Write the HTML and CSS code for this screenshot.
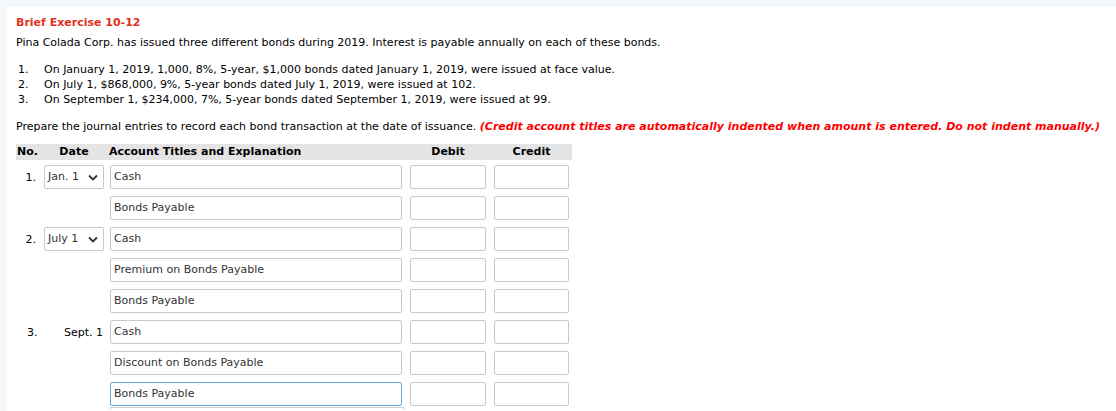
FILE: index.html
```html
<!DOCTYPE html>
<html>
<head>
<meta charset="utf-8">
<link rel="stylesheet" href="styles.css">
</head>
<body>
<div class="page">
  <h1 class="title">Brief Exercise 10-12</h1>
  <p class="intro">Pina Colada Corp. has issued three different bonds during 2019. Interest is payable annually on each of these bonds.</p>
  <ol class="items">
    <li><span class="num">1.</span><span>On January 1, 2019, 1,000, 8%, 5-year, $1,000 bonds dated January 1, 2019, were issued at face value.</span></li>
    <li><span class="num">2.</span><span>On July 1, $868,000, 9%, 5-year bonds dated July 1, 2019, were issued at 102.</span></li>
    <li><span class="num">3.</span><span>On September 1, $234,000, 7%, 5-year bonds dated September 1, 2019, were issued at 99.</span></li>
  </ol>
  <p class="prompt">Prepare the journal entries to record each bond transaction at the date of issuance. <em class="warn">(Credit account titles are automatically indented when amount is entered. Do not indent manually.)</em></p>

  <div class="journal">
    <div class="head">
      <div class="c-no">No.</div>
      <div class="c-date">Date</div>
      <div class="c-acct">Account Titles and Explanation</div>
      <div class="c-dr">Debit</div>
      <div class="c-cr">Credit</div>
    </div>

    <div class="row">
      <div class="c-no num-r">1.</div>
      <div class="c-date"><div class="select">Jan. 1<svg class="chev" viewBox="0 0 10 6"><path d="M1 1 L5 5 L9 1" /></svg></div></div>
      <div class="c-acct"><div class="field">Cash</div></div>
      <div class="c-dr"><div class="field"></div></div>
      <div class="c-cr"><div class="field"></div></div>
    </div>
    <div class="row">
      <div class="c-no"></div>
      <div class="c-date"></div>
      <div class="c-acct"><div class="field">Bonds Payable</div></div>
      <div class="c-dr"><div class="field"></div></div>
      <div class="c-cr"><div class="field"></div></div>
    </div>

    <div class="row">
      <div class="c-no num-r">2.</div>
      <div class="c-date"><div class="select">July 1<svg class="chev" viewBox="0 0 10 6"><path d="M1 1 L5 5 L9 1" /></svg></div></div>
      <div class="c-acct"><div class="field">Cash</div></div>
      <div class="c-dr"><div class="field"></div></div>
      <div class="c-cr"><div class="field"></div></div>
    </div>
    <div class="row">
      <div class="c-no"></div>
      <div class="c-date"></div>
      <div class="c-acct"><div class="field">Premium on Bonds Payable</div></div>
      <div class="c-dr"><div class="field"></div></div>
      <div class="c-cr"><div class="field"></div></div>
    </div>
    <div class="row">
      <div class="c-no"></div>
      <div class="c-date"></div>
      <div class="c-acct"><div class="field">Bonds Payable</div></div>
      <div class="c-dr"><div class="field"></div></div>
      <div class="c-cr"><div class="field"></div></div>
    </div>

    <div class="row">
      <div class="c-no num-r">3.</div>
      <div class="c-date date-text">Sept. 1</div>
      <div class="c-acct"><div class="field">Cash</div></div>
      <div class="c-dr"><div class="field"></div></div>
      <div class="c-cr"><div class="field"></div></div>
    </div>
    <div class="row">
      <div class="c-no"></div>
      <div class="c-date"></div>
      <div class="c-acct"><div class="field">Discount on Bonds Payable</div></div>
      <div class="c-dr"><div class="field"></div></div>
      <div class="c-cr"><div class="field"></div></div>
    </div>
    <div class="row last">
      <div class="c-no"></div>
      <div class="c-date"></div>
      <div class="c-acct anchor"><div class="field focus">Bonds Payable</div><div class="dropdown"></div></div>
      <div class="c-dr"><div class="field"></div></div>
      <div class="c-cr"><div class="field"></div></div>
    </div>
  </div>
</div>
</body>
</html>
```

FILE: styles.css
```css
html, body {
  margin: 0;
  padding: 0;
}
body {
  background: #f5f8fb;
  font-family: "DejaVu Sans", Verdana, sans-serif;
  font-size: 11px;
  color: #000;
  overflow: hidden;
  height: 411px;
}
.page {
  margin: 7px 0 0 7px;
  background: #fff;
  padding: 9px 9px 0 9px;
  height: 404px;
  box-sizing: border-box;
  overflow: hidden;
}
.title {
  margin: 0;
  font-size: 11px;
  font-weight: bold;
  color: #e2301a;
  line-height: 14px;
}
.intro {
  margin: 6px 0 0 0;
  line-height: 14px;
}
.items {
  list-style: none;
  margin: 12px 0 0 0;
  padding: 0;
}
.items li {
  display: flex;
  line-height: 15px;
}
.items .num {
  width: 19px;
  padding-left: 2px;
  margin-right: 7px;
}
.prompt {
  margin: 13px 0 0 0;
  line-height: 14px;
}
.warn {
  color: #f00;
  font-weight: bold;
  font-style: italic;
}
.journal {
  margin-top: 10px;
  width: 556px;
}
.head {
  display: flex;
  background: #e4e4e4;
  height: 16px;
  line-height: 16px;
  font-weight: bold;
  margin-bottom: 5px;
}
.row {
  display: flex;
  height: 24px;
  margin-bottom: 7px;
  align-items: center;
}
.row.last {
  margin-bottom: 0;
}
.c-no {
  width: 28px;
  box-sizing: border-box;
  padding-left: 1px;
}
.c-date {
  width: 60px;
  margin-right: 6px;
}
.head .c-date {
  text-align: center;
}
.c-acct {
  width: 292px;
  margin-right: 8px;
}
.head .c-acct {
  margin-left: -1px;
  width: 293px;
}
.c-dr {
  width: 76px;
  margin-right: 8px;
}
.c-cr {
  width: 75px;
}
.head .c-dr, .head .c-cr {
  text-align: center;
}
.num-r {
  text-align: right;
  padding-right: 8px;
}
.row .c-no.num-r {
  padding-left: 0;
}
.date-text {
  text-align: right;
  padding-right: 1px;
  box-sizing: border-box;
}
.row:nth-of-type(7) .c-no {
  text-align: left;
  padding-left: 11px;
}
.field {
  box-sizing: border-box;
  height: 24px;
  border: 1px solid #c9c9c9;
  border-radius: 2px;
  padding: 0 3px;
  line-height: 22px;
  color: #333;
  background: #fff;
  white-space: nowrap;
  overflow: hidden;
}
.field.focus {
  border-color: #62a8e5;
}
.anchor {
  position: relative;
}
.dropdown {
  position: absolute;
  left: 0;
  top: 25px;
  width: 294px;
  height: 3px;
  border: 1px solid #d0d0d0;
  border-bottom: none;
  background: #fff;
  box-sizing: border-box;
}
.select {
  box-sizing: border-box;
  height: 24px;
  border: 1px solid #c9c9c9;
  border-radius: 2px;
  padding: 0 3px;
  line-height: 22px;
  color: #333;
  display: flex;
  align-items: center;
  justify-content: space-between;
}
.chev {
  width: 10px;
  height: 7px;
  margin-right: 2px;
}
.chev path {
  fill: none;
  stroke: #333;
  stroke-width: 1.8;
}
```
